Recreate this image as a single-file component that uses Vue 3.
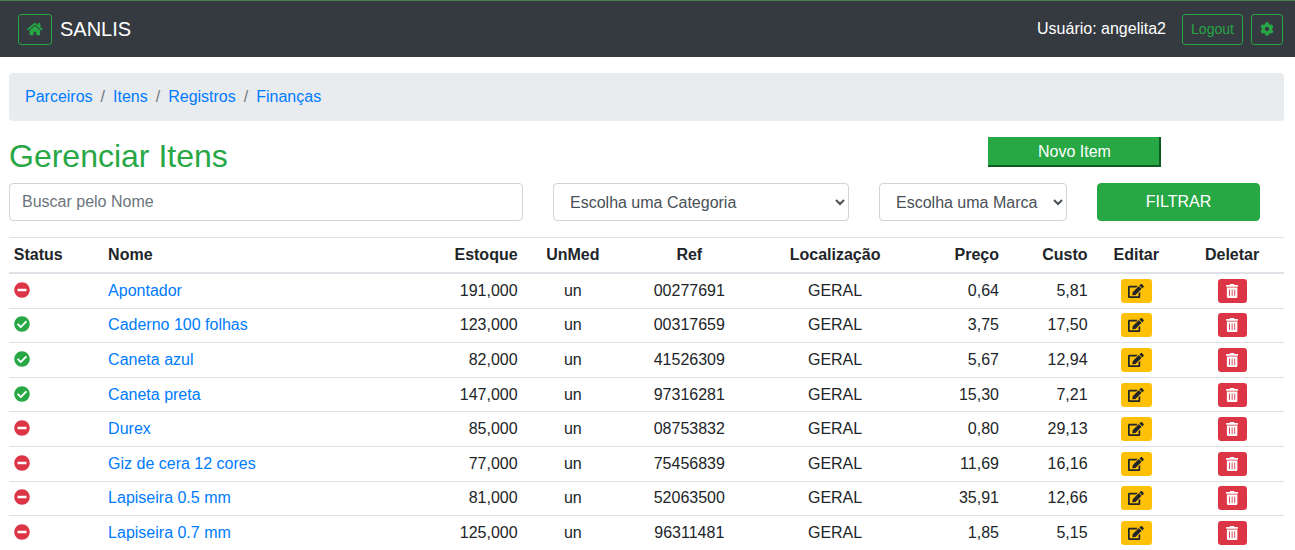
<script setup>
const paths = {
  home: 'M280.37 148.26L96 300.11V464a16 16 0 0 0 16 16l112.06-.29a16 16 0 0 0 15.92-16V368a16 16 0 0 1 16-16h64a16 16 0 0 1 16 16v95.64a16 16 0 0 0 16 16.05L464 480a16 16 0 0 0 16-16V300L295.67 148.26a12.19 12.19 0 0 0-15.3 0zM571.6 251.47L488 182.56V44.05a12 12 0 0 0-12-12h-56a12 12 0 0 0-12 12v72.61L318.47 43a48 48 0 0 0-61 0L4.34 251.47a12 12 0 0 0-1.6 16.9l25.5 31A12 12 0 0 0 45.15 301l235.22-193.74a12.19 12.19 0 0 1 15.3 0L530.9 301a12 12 0 0 0 16.9-1.6l25.5-31a12 12 0 0 0-1.7-16.93z',
  cog: 'M487.4 315.7l-42.6-24.6c4.3-23.2 4.3-47 0-70.2l42.6-24.6c4.9-2.8 7.1-8.6 5.5-14-11.1-35.6-30-67.8-54.7-94.6-3.8-4.1-10-5.1-14.8-2.3L380.8 110c-17.9-15.4-38.5-27.3-60.8-35.1V25.8c0-5.6-3.9-10.5-9.4-11.7-36.7-8.2-74.3-7.8-109.2 0-5.5 1.2-9.4 6.1-9.4 11.7V75c-22.2 7.9-42.8 19.8-60.8 35.1L88.7 85.5c-4.9-2.8-11-1.9-14.8 2.3-24.7 26.7-43.6 58.9-54.7 94.6-1.7 5.4.6 11.2 5.5 14L67.3 221c-4.3 23.2-4.3 47 0 70.2l-42.6 24.6c-4.9 2.8-7.1 8.6-5.5 14 11.1 35.6 30 67.8 54.7 94.6 3.8 4.1 10 5.1 14.8 2.3l42.6-24.6c17.9 15.4 38.5 27.3 60.8 35.1v49.2c0 5.6 3.9 10.5 9.4 11.7 36.7 8.2 74.3 7.8 109.2 0 5.5-1.2 9.4-6.1 9.4-11.7v-49.2c22.2-7.9 42.8-19.8 60.8-35.1l42.6 24.6c4.9 2.8 11 1.9 14.8-2.3 24.7-26.7 43.6-58.9 54.7-94.6 1.5-5.5-.7-11.3-5.6-14.1zM256 336c-44.1 0-80-35.9-80-80s35.9-80 80-80 80 35.9 80 80-35.9 80-80 80z',
  minus: 'M256 8C119 8 8 119 8 256s111 248 248 248 248-111 248-248S393 8 256 8zM124 296c-6.6 0-12-5.4-12-12v-56c0-6.6 5.4-12 12-12h264c6.6 0 12 5.4 12 12v56c0 6.6-5.4 12-12 12H124z',
  check: 'M504 256c0 136.967-111.033 248-248 248S8 392.967 8 256 119.033 8 256 8s248 111.033 248 248zM227.314 387.314l184-184c6.248-6.248 6.248-16.379 0-22.627l-22.627-22.627c-6.248-6.249-16.379-6.249-22.628 0L216 308.118l-70.059-70.059c-6.248-6.248-16.379-6.248-22.628 0l-22.627 22.627c-6.248 6.248-6.248 16.379 0 22.627l104 104c6.249 6.249 16.379 6.249 22.628.001z',
  edit: 'M402.6 83.2l90.2 90.2c3.8 3.8 3.8 10 0 13.8L274.4 405.6l-92.8 10.3c-12.4 1.4-22.9-9.1-21.5-21.5l10.3-92.8L388.8 83.2c3.8-3.8 10-3.8 13.8 0zm162-22.9l-48.8-48.8c-15.2-15.2-39.9-15.2-55.2 0l-35.4 35.4c-3.8 3.8-3.8 10 0 13.8l90.2 90.2c3.8 3.8 10 3.8 13.8 0l35.4-35.4c15.2-15.3 15.2-40 0-55.2zM384 346.2V448H64V128h231.8c3.2 0 6.2-1.3 8.5-3.5l40-40c7.6-7.6 2.2-20.5-8.5-20.5H48C21.5 64 0 85.5 0 112v352c0 26.5 21.5 48 48 48h352c26.5 0 48-21.5 48-48V306.2c0-10.7-12.9-16-20.5-8.5l-40 40c-2.2 2.3-3.5 5.3-3.5 8.5z',
  trash: 'M32 464a48 48 0 0 0 48 48h288a48 48 0 0 0 48-48V128H32zm272-256a16 16 0 0 1 32 0v224a16 16 0 0 1-32 0zm-96 0a16 16 0 0 1 32 0v224a16 16 0 0 1-32 0zm-96 0a16 16 0 0 1 32 0v224a16 16 0 0 1-32 0zM432 32H312l-9.4-18.7A24 24 0 0 0 281.1 0H166.8a23.72 23.72 0 0 0-21.4 13.3L136 32H16A16 16 0 0 0 0 48v32a16 16 0 0 0 16 16h416a16 16 0 0 0 16-16V48a16 16 0 0 0-16-16z',
}

const links = ['Parceiros', 'Itens', 'Registros', 'Finanças']

const items = [
  { ok: false, nome: 'Apontador', estoque: '191,000', ref: '00277691', preco: '0,64', custo: '5,81' },
  { ok: true, nome: 'Caderno 100 folhas', estoque: '123,000', ref: '00317659', preco: '3,75', custo: '17,50' },
  { ok: true, nome: 'Caneta azul', estoque: '82,000', ref: '41526309', preco: '5,67', custo: '12,94' },
  { ok: true, nome: 'Caneta preta', estoque: '147,000', ref: '97316281', preco: '15,30', custo: '7,21' },
  { ok: false, nome: 'Durex', estoque: '85,000', ref: '08753832', preco: '0,80', custo: '29,13' },
  { ok: false, nome: 'Giz de cera 12 cores', estoque: '77,000', ref: '75456839', preco: '11,69', custo: '16,16' },
  { ok: false, nome: 'Lapiseira 0.5 mm', estoque: '81,000', ref: '52063500', preco: '35,91', custo: '12,66' },
  { ok: false, nome: 'Lapiseira 0.7 mm', estoque: '125,000', ref: '96311481', preco: '1,85', custo: '5,15' },
]
</script>

<template>
  <div class="page">
    <nav class="navbar">
      <a class="nav-btn home-btn" href="#">
        <svg class="nav-icon" viewBox="0 0 576 512"><path :d="paths.home" /></svg>
      </a>
      <span class="brand">SANLIS</span>
      <span class="user">Usuário: angelita2</span>
      <a class="nav-btn logout-btn" href="#">Logout</a>
      <a class="nav-btn cog-btn" href="#">
        <svg class="nav-icon cog" viewBox="0 0 512 512"><path :d="paths.cog" /></svg>
      </a>
    </nav>

    <main class="content">
      <ol class="breadcrumb">
        <li v-for="(link, i) in links" :key="link">
          <span v-if="i > 0" class="sep">/</span>
          <a href="#">{{ link }}</a>
        </li>
      </ol>

      <div class="title-row">
        <h1>Gerenciar Itens</h1>
        <a class="new-item" href="#">Novo Item</a>
      </div>

      <div class="filters">
        <input class="field search" type="text" placeholder="Buscar pelo Nome" />
        <select class="field cat"><option>Escolha uma Categoria</option></select>
        <select class="field brand-select"><option>Escolha uma Marca</option></select>
        <button class="filter-btn">FILTRAR</button>
      </div>

      <table>
        <colgroup>
          <col class="c-status" />
          <col class="c-nome" />
          <col class="c-estoque" />
          <col class="c-unmed" />
          <col class="c-ref" />
          <col class="c-local" />
          <col class="c-preco" />
          <col class="c-custo" />
          <col class="c-editar" />
          <col />
        </colgroup>
        <thead>
          <tr>
            <th>Status</th>
            <th>Nome</th>
            <th class="right">Estoque</th>
            <th class="center">UnMed</th>
            <th class="center">Ref</th>
            <th class="center">Localização</th>
            <th class="right">Preço</th>
            <th class="right">Custo</th>
            <th class="center">Editar</th>
            <th class="center">Deletar</th>
          </tr>
        </thead>
        <tbody>
          <tr v-for="item in items" :key="item.ref">
            <td>
              <svg class="status" :class="item.ok ? 'ok' : 'off'" viewBox="0 0 512 512">
                <path :d="item.ok ? paths.check : paths.minus" />
              </svg>
            </td>
            <td><a href="#">{{ item.nome }}</a></td>
            <td class="right">{{ item.estoque }}</td>
            <td class="center">un</td>
            <td class="center">{{ item.ref }}</td>
            <td class="center">GERAL</td>
            <td class="right">{{ item.preco }}</td>
            <td class="right">{{ item.custo }}</td>
            <td class="center">
              <a class="row-btn edit" href="#">
                <svg viewBox="0 0 576 512"><path :d="paths.edit" /></svg>
              </a>
            </td>
            <td class="center">
              <a class="row-btn trash" href="#">
                <svg viewBox="0 0 448 512"><path :d="paths.trash" /></svg>
              </a>
            </td>
          </tr>
        </tbody>
      </table>
    </main>
  </div>
</template>

<style scoped>
.page {
  font-family: "Liberation Sans", Arial, sans-serif;
  font-size: 16px;
  line-height: 24px;
  color: #212529;
}

a {
  text-decoration: none;
  color: #007bff;
}

.navbar {
  display: flex;
  align-items: center;
  box-sizing: border-box;
  height: 57px;
  padding: 0 12px 0 18px;
  background: #343a40;
  border-top: 1px solid #4b7f52;
}

.nav-btn {
  display: flex;
  align-items: center;
  justify-content: center;
  box-sizing: border-box;
  height: 31px;
  border: 1px solid #28a745;
  border-radius: 3.2px;
  color: #28a745;
  font-size: 14px;
}

.home-btn {
  width: 34px;
}

.logout-btn {
  width: 61px;
  margin-left: 16px;
}

.cog-btn {
  width: 32px;
  margin-left: 8px;
}

.nav-icon {
  width: 15.75px;
  height: 14px;
  fill: #28a745;
}

.nav-icon.cog {
  width: 14px;
}

.brand {
  margin-left: 8px;
  font-size: 20px;
  color: #fff;
}

.user {
  margin-left: auto;
  color: #fff;
}

.content {
  padding: 16px 11px 0 9px;
}

.breadcrumb {
  display: flex;
  margin: 0 0 16px;
  padding: 12px 16px;
  list-style: none;
  background: #e9ecef;
  border-radius: 4px;
}

.sep {
  padding: 0 8px;
  color: #6c757d;
}

.title-row {
  display: flex;
  align-items: flex-start;
  justify-content: space-between;
  margin-bottom: 8px;
}

h1 {
  margin: 0;
  font-size: 32px;
  font-weight: 400;
  line-height: 38.4px;
  color: #28a745;
}

.new-item {
  box-sizing: border-box;
  width: 173px;
  height: 30px;
  margin-right: 123px;
  background: #28a745;
  border-right: 2px solid #0b5d1e;
  border-bottom: 2px solid #0b5d1e;
  color: #fff;
  text-align: center;
  line-height: 30px;
  padding-left: 2px;
}

.filters {
  display: flex;
  gap: 30px;
  margin-bottom: 16px;
}

.field {
  box-sizing: border-box;
  height: 38px;
  padding: 6px 12px;
  background: #fff;
  border: 1px solid #ced4da;
  border-radius: 4px;
  font: inherit;
  color: #495057;
}

.field::placeholder {
  color: #6c757d;
}

.search {
  width: 514px;
}

.cat {
  width: 296px;
}

.brand-select {
  width: 188px;
}

.filter-btn {
  width: 163px;
  height: 38px;
  padding: 0;
  background: #28a745;
  border: 1px solid #28a745;
  border-radius: 4px;
  font: inherit;
  color: #fff;
}

table {
  width: 1275px;
  border-collapse: collapse;
  table-layout: fixed;
}

.c-status { width: 94.3px; }
.c-nome { width: 295px; }
.c-estoque { width: 124.1px; }
.c-unmed { width: 100.8px; }
.c-ref { width: 132.2px; }
.c-local { width: 159.4px; }
.c-preco { width: 89px; }
.c-custo { width: 88.6px; }
.c-editar { width: 87.8px; }

th,
td {
  padding: 4.8px;
  border-top: 1px solid #dee2e6;
  text-align: left;
  vertical-align: top;
}

th {
  border-bottom: 2px solid #dee2e6;
  font-weight: 700;
}

.right {
  text-align: right;
}

.center {
  text-align: center;
}

.status {
  display: block;
  width: 16px;
  height: 16px;
  margin-top: 3px;
}

.status.ok {
  fill: #28a745;
}

.status.off {
  fill: #dc3545;
}

.row-btn {
  display: inline-flex;
  align-items: center;
  justify-content: center;
  height: 24px;
  border-radius: 3.2px;
  vertical-align: top;
}

.row-btn.edit {
  width: 31px;
  background: #ffc107;
  fill: #212529;
}

.row-btn.edit svg {
  width: 15.75px;
  height: 14px;
}

.row-btn.trash {
  width: 29px;
  background: #dc3545;
  fill: #fff;
}

.row-btn.trash svg {
  width: 12.25px;
  height: 14px;
}
</style>
